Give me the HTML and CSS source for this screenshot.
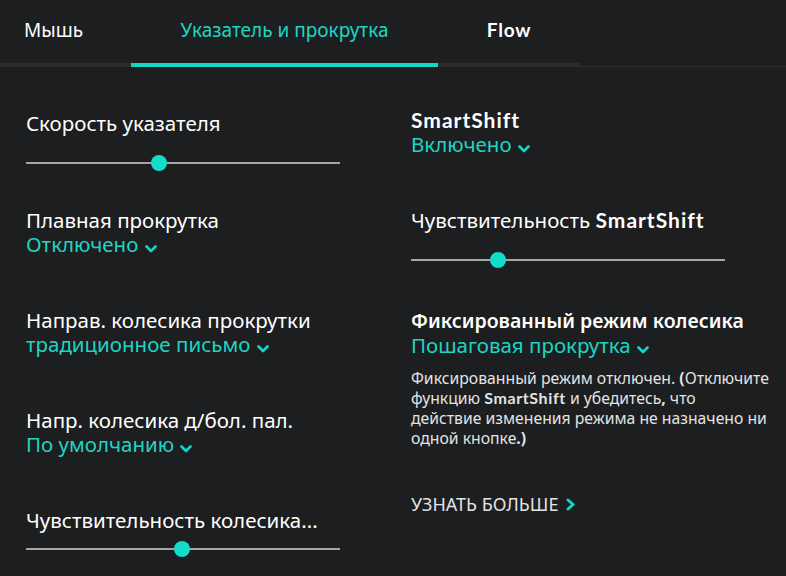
FILE: index.html
```html
<!DOCTYPE html>
<html lang="ru">
<head>
<meta charset="utf-8">
<link rel="stylesheet" href="styles.css">
</head>
<body>
<div class="page">
  <nav class="tabs">
    <div class="tab tab-mouse">Мышь</div>
    <div class="tab tab-active">Указатель и прокрутка</div>
    <div class="tab tab-flow">Flow</div>
    <div class="tab-rest"></div>
  </nav>
  <main class="cols">
    <section class="col col-left">
      <div class="setting s-speed">
        <div class="title">Скорость указателя</div>
        <div class="slider"><div class="track"></div><div class="thumb" style="left:125px"></div></div>
      </div>
      <div class="setting s-smooth">
        <div class="title">Плавная прокрутка</div>
        <div class="value">Отключено <svg class="chev" viewBox="0 0 12 8"><path d="M1.5 1.5 L6 6 L10.5 1.5"/></svg></div>
      </div>
      <div class="setting s-dir">
        <div class="title">Направ. колесика прокрутки</div>
        <div class="value">традиционное письмо <svg class="chev" viewBox="0 0 12 8"><path d="M1.5 1.5 L6 6 L10.5 1.5"/></svg></div>
      </div>
      <div class="setting s-thumbdir">
        <div class="title">Напр. колесика д/бол. пал.</div>
        <div class="value">По умолчанию <svg class="chev" viewBox="0 0 12 8"><path d="M1.5 1.5 L6 6 L10.5 1.5"/></svg></div>
      </div>
      <div class="setting s-wheel">
        <div class="title">Чувствительность колесика...</div>
        <div class="slider slider-tight"><div class="track"></div><div class="thumb" style="left:148px"></div></div>
      </div>
    </section>
    <section class="col col-right">
      <div class="setting s-smartshift">
        <div class="title geo">SmartShift</div>
        <div class="value">Включено <svg class="chev" viewBox="0 0 12 8"><path d="M1.5 1.5 L6 6 L10.5 1.5"/></svg></div>
      </div>
      <div class="setting s-sens">
        <div class="title">Чувствительность <span class="geo">SmartShift</span></div>
        <div class="slider"><div class="track"></div><div class="thumb" style="left:79px"></div></div>
      </div>
      <div class="setting s-ratchet">
        <div class="title semibold">Фиксированный режим колесика</div>
        <div class="value">Пошаговая прокрутка <svg class="chev" viewBox="0 0 12 8"><path d="M1.5 1.5 L6 6 L10.5 1.5"/></svg></div>
        <p class="note"><span class="ln">Фиксированный режим отключен. <b>(</b>Отключите</span><span class="ln">функцию <b class="geo">SmartShift</b> и убедитесь<b>,</b> что</span><span class="ln">действие изменения режима не назначено ни</span><span class="ln">одной кнопке<b>.)</b></span></p>
      </div>
      <a class="more">УЗНАТЬ БОЛЬШЕ <svg class="chev-r" viewBox="0 0 9 13"><path d="M2 2 L7 6.5 L2 11"/></svg></a>
    </section>
  </main>
</div>
</body>
</html>
```

FILE: styles.css
```css
html, body {
  margin: 0;
  padding: 0;
  background: #1c1e1f;
}
body {
  width: 786px;
  height: 576px;
  overflow: hidden;
  font-family: "Noto Sans", "Open Sans", sans-serif;
  color: #ffffff;
}
.page {
  width: 786px;
  height: 576px;
}
.tabs {
  display: flex;
  height: 67px;
  align-items: stretch;
}
.tab {
  box-sizing: border-box;
  font-size: 19px;
  line-height: 22px;
  padding-top: 19px;
  border-bottom: 4px solid #2a2c2d;
  color: #ffffff;
  white-space: nowrap;
}
.tab-mouse {
  width: 131px;
  padding-left: 24px;
}
.tab-active {
  width: 307px;
  text-align: center;
  color: #1fd5c4;
  border-bottom-color: #14d6c6;
}
.tab-flow {
  width: 142px;
  text-align: center;
  font-family: "Lato", sans-serif;
  font-weight: 700;
  font-size: 19px;
  letter-spacing: 0.8px;
}
.tab-rest {
  flex: 1;
  border-bottom: 1px solid #2a2c2d;
}
.cols {
  display: flex;
  padding-left: 26px;
}
.col {
  display: flex;
  flex-direction: column;
}
.col-left {
  width: 314px;
}
.col-right {
  width: 370px;
  margin-left: 71px;
}
.title {
  font-size: 20.5px;
  line-height: 24px;
  white-space: nowrap;
}
.semibold {
  font-weight: 600;
  font-size: 19.5px;
}
.geo {
  font-family: "Lato", sans-serif;
  font-weight: 700;
  font-size: 21px;
  letter-spacing: 1px;
}
.value {
  font-size: 20.5px;
  line-height: 24px;
  color: #1fd5c4;
  white-space: nowrap;
}
.chev {
  width: 12px;
  height: 8px;
  margin-left: 1px;
  vertical-align: -1px;
}
.chev path, .chev-r path {
  fill: none;
  stroke: #14d6c6;
  stroke-width: 2.6;
  stroke-linecap: round;
  stroke-linejoin: round;
}
.chev-r path {
  stroke-width: 3;
}
.slider {
  position: relative;
  width: 314px;
  height: 16px;
  margin-top: 20px;
}
.slider-tight {
  margin-top: 9px;
}
.track {
  position: absolute;
  left: 0;
  right: 0;
  top: 7px;
  height: 2px;
  background: #a3a5a6;
}
.thumb {
  position: absolute;
  top: 0;
  width: 16px;
  height: 16px;
  border-radius: 50%;
  background: #14dccb;
}
.s-speed { margin-top: 44px; }
.s-smooth { margin-top: 37px; }
.s-dir { margin-top: 52px; }
.s-thumbdir { margin-top: 52px; }
.s-wheel { margin-top: 52px; }
.s-smartshift { margin-top: 41px; }
.s-sens { margin-top: 52px; }
.s-ratchet { margin-top: 41px; }
.note {
  margin: 11px 0 0;
  font-size: 15.75px;
  line-height: 20px;
  color: #e3e3e3;
}
.ln {
  display: block;
  white-space: nowrap;
}
.note b {
  font-weight: 700;
}
.note b.geo {
  font-size: 16px;
  letter-spacing: 0.6px;
}
.more {
  margin-top: 45px;
  font-size: 18px;
  line-height: 22px;
  color: #e3e3e3;
  display: flex;
  align-items: center;
}
.chev-r {
  width: 9px;
  height: 13px;
  margin-left: 8px;
}
```
